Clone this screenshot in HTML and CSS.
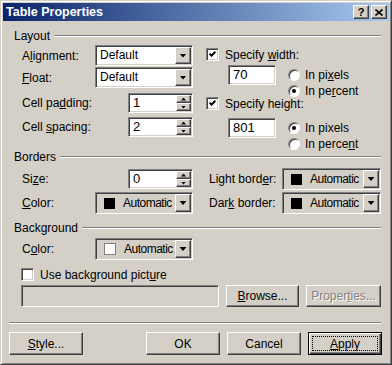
FILE: index.html
```html
<!DOCTYPE html>
<html lang="en">
<head>
  <meta charset="utf-8">
  <title>Table Properties</title>
  <link rel="stylesheet" href="styles.css">
</head>
<body>

<div class="dialog">

  <div class="titlebar">
    <span class="title">Table Properties</span>
    <div class="tbtns">
      <span class="tbtn">?</span>
      <span class="tbtn">
        <svg width="8" height="7" viewBox="0 0 8 7"><path d="M0.5 0.5l7 6M7.5 0.5l-7 6" stroke="#000" stroke-width="1.6"/></svg>
      </span>
    </div>
  </div>

  <div class="content">

    <!-- Layout -->
    <div class="group-head"><span>Layout</span><i class="rule"></i></div>
    <div class="layout">
      <div class="lcol">
        <div class="frow">
          <span>A<u>l</u>ignment:</span>
          <div class="select"><span class="val">Default</span><span class="drop"></span></div>
        </div>
        <div class="frow gap1">
          <span><u>F</u>loat:</span>
          <div class="select"><span class="val">Default</span><span class="drop"></span></div>
        </div>
        <div class="frow spinrow">
          <span>Cell pa<u>d</u>ding:</span>
          <div class="spinner"><span class="val">1</span><span class="spin"><i class="up"></i><i class="down"></i></span></div>
        </div>
        <div class="frow spinrow">
          <span>Cell <u>s</u>pacing:</span>
          <div class="spinner"><span class="val">2</span><span class="spin"><i class="up"></i><i class="down"></i></span></div>
        </div>
      </div>

      <div class="rcol">
        <div class="chkrow">
          <span class="check on"><svg width="7" height="7" viewBox="0 0 7 7"><path d="M0.6 2.6l2 2 3.8-3.8" stroke="#000" stroke-width="2" fill="none"/></svg></span>
          <span>Specify <u>w</u>idth:</span>
        </div>
        <div class="sub">
          <div class="tin">70</div>
          <div class="radios">
            <div class="radio"><i class="dot"></i><span>In pi<u>x</u>els</span></div>
            <div class="radio"><i class="dot on"></i><span>In pe<u>r</u>cent</span></div>
          </div>
        </div>
        <div class="chkrow chk2">
          <span class="check on"><svg width="7" height="7" viewBox="0 0 7 7"><path d="M0.6 2.6l2 2 3.8-3.8" stroke="#000" stroke-width="2" fill="none"/></svg></span>
          <span>Specify height:</span>
        </div>
        <div class="sub sub2">
          <div class="tin">801</div>
          <div class="radios">
            <div class="radio"><i class="dot on"></i><span>In pixels</span></div>
            <div class="radio"><i class="dot"></i><span>In perce<u>n</u>t</span></div>
          </div>
        </div>
      </div>
    </div>

    <!-- Borders -->
    <div class="group-head"><span>Borders</span><i class="rule"></i></div>
    <div class="borders">
      <div class="frow">
        <span>Si<u>z</u>e:</span>
        <div class="spinner"><span class="val">0</span><span class="spin"><i class="up"></i><i class="down"></i></span></div>
      </div>
      <div class="frow">
        <span>Light bord<u>e</u>r:</span>
        <div class="colorsel"><span class="swatch"></span><span class="cval">Automatic</span><span class="drop"></span></div>
      </div>
      <div class="frow">
        <span><u>C</u>olor:</span>
        <div class="colorsel"><span class="swatch"></span><span class="cval">Automatic</span><span class="drop"></span></div>
      </div>
      <div class="frow">
        <span>Dar<u>k</u> border:</span>
        <div class="colorsel"><span class="swatch"></span><span class="cval">Automatic</span><span class="drop"></span></div>
      </div>
    </div>

    <!-- Background -->
    <div class="group-head bg-head"><span>Background</span><i class="rule"></i></div>
    <div class="bgrow">
      <div class="frow">
        <span>C<u>o</u>lor:</span>
        <div class="colorsel"><span class="swatch white"></span><span class="cval">Automatic</span><span class="drop"></span></div>
      </div>
    </div>
    <div class="chkrow picrow">
      <span class="check"></span>
      <span>Use background pict<u>u</u>re</span>
    </div>
    <div class="pathrow">
      <div class="field off"></div>
      <div class="btn browse"><u>B</u>rowse...</div>
      <div class="btn props disabled">Proper<u>t</u>ies...</div>
    </div>

    <div class="sep"></div>

    <div class="actions">
      <div class="btn"><u>S</u>tyle...</div>
      <div class="btn ok">OK</div>
      <div class="btn">Cancel</div>
      <div class="btn def"><u>A</u>pply</div>
    </div>

  </div>
</div>

</body>
</html>
```

FILE: styles.css
```css
body{
  margin:0;
  font-family:"Liberation Sans", Arial, sans-serif;
  font-size:12px;
  color:#000;
  background:#d4d0c8;
}

u{
  text-decoration-thickness:1px;
  text-underline-offset:1px;
}

.dialog{
  width:392px;
  height:365px;
  box-sizing:border-box;
  background:#d4d0c8;
  border:1px solid;
  border-color:#d4d0c8 #404040 #404040 #d4d0c8;
  box-shadow:inset 1px 1px #fff, inset -1px -1px #808080;
  padding:2px;
}

/* title bar */

.titlebar{
  height:18px;
  display:flex;
  align-items:center;
  padding-left:3px;
  background:linear-gradient(to right, #0a246a, #a6caf0);
  color:#fff;
  font-weight:bold;
  font-size:12.5px;
}

.tbtns{
  margin-left:auto;
  display:flex;
  gap:2px;
  padding-right:2px;
}

.tbtn{
  width:16px;
  height:14px;
  box-sizing:border-box;
  display:flex;
  align-items:center;
  justify-content:center;
  background:#d4d0c8;
  color:#000;
  font-size:11px;
  font-weight:bold;
  border:1px solid;
  border-color:#fff #404040 #404040 #fff;
  box-shadow:inset -1px -1px #808080;
}

/* body */

.content{
  padding:8px 8px 0 6px;
}

.group-head{
  display:flex;
  align-items:center;
  gap:4px;
  height:14px;
  padding-left:5px;
}

.rule{
  flex:1;
  height:0;
  border-top:1px solid #808080;
  border-bottom:1px solid #fff;
}

.frow{
  display:flex;
  align-items:center;
  height:21px;
}

.frow > :last-child{
  margin-left:auto;
}

/* sunken and raised edges */

.select,.spinner,.tin,.check,.field,.colorsel{
  box-sizing:border-box;
  border:1px solid;
  border-color:#808080 #fff #fff #808080;
  box-shadow:inset 1px 1px #404040, inset -1px -1px #d4d0c8;
}

.drop,.spin i,.btn{
  box-sizing:border-box;
  background:#d4d0c8;
  border:1px solid;
  border-color:#fff #404040 #404040 #fff;
  box-shadow:inset -1px -1px #808080;
}

.select{
  width:98px;
  height:21px;
  padding:1px;
  display:flex;
  background:#fff;
}

.val{
  flex:1;
  padding-left:3px;
  line-height:17px;
}

.drop{
  width:16px;
  height:17px;
  display:flex;
  align-items:center;
  justify-content:center;
}

.drop::after{
  content:"";
  width:7px;
  height:4px;
  background:#000;
  clip-path:polygon(0 0, 100% 0, 50% 100%);
}

.spinner{
  width:65px;
  height:20px;
  padding:1px;
  display:flex;
  background:#fff;
}

.spinner .val{
  line-height:16px;
  font-size:13px;
}

.spin{
  width:15px;
  display:flex;
  flex-direction:column;
}

.spin i{
  height:8px;
  display:flex;
  align-items:center;
  justify-content:center;
}

.spin i::after{
  content:"";
  width:5px;
  height:3px;
  background:#000;
}

.spin .up::after{
  clip-path:polygon(50% 0, 100% 100%, 0 100%);
}

.spin .down::after{
  clip-path:polygon(0 0, 100% 0, 50% 100%);
}

/* layout group */

.layout{
  display:flex;
  height:105px;
  margin-top:2px;
  padding-left:13px;
}

.lcol{
  width:171px;
}

.gap1{
  margin-top:1px;
}

.spinrow{
  height:20px;
  margin-top:4px;
}

.frow.gap1 + .spinrow{
  margin-top:5px;
}

.rcol{
  flex:1;
  margin-left:13px;
  padding-top:3px;
}

.chkrow{
  display:flex;
  align-items:center;
  gap:6px;
  height:13px;
}

.check{
  width:13px;
  height:13px;
  background:#fff;
  display:flex;
  align-items:center;
  justify-content:center;
}

.chk2{
  margin-top:-1px;
}

.sub{
  display:flex;
  margin-top:4px;
}

.sub2{
  margin-top:8px;
}

.tin{
  width:48px;
  height:20px;
  margin-left:22px;
  padding-left:4px;
  background:#fff;
  line-height:18px;
  font-size:13px;
}

.radios{
  margin-left:12px;
  padding-top:3px;
  display:flex;
  flex-direction:column;
  gap:2px;
}

.radio{
  display:flex;
  align-items:center;
  gap:5px;
  height:14px;
}

.dot{
  width:12px;
  height:12px;
  box-sizing:border-box;
  border-radius:50%;
  border:1px solid;
  border-color:#808080 #fff #fff #808080;
  box-shadow:inset 1px 1px #404040;
  background:#fff;
  display:flex;
  align-items:center;
  justify-content:center;
}

.dot.on::after{
  content:"";
  width:4px;
  height:4px;
  border-radius:50%;
  background:#000;
}

/* borders group */

.borders{
  display:grid;
  grid-template-columns:171px 172px;
  column-gap:16px;
  row-gap:2px;
  margin-top:4px;
  padding-left:13px;
}

.borders .frow,.bgrow .frow{
  height:22px;
}

.colorsel{
  width:98px;
  height:22px;
  padding:1px;
  display:flex;
  align-items:center;
  background:#d4d0c8;
}

.borders .frow:nth-child(2n) .colorsel{
  width:99px;
}

.colorsel .drop{
  height:18px;
}

.swatch{
  width:11px;
  height:11px;
  margin-left:7px;
  background:#000;
}

.swatch.white{
  box-sizing:border-box;
  width:12px;
  height:12px;
  background:#fff;
  border:1px solid #808080;
}

.cval{
  flex:1;
  padding-left:8px;
  letter-spacing:-0.5px;
}

/* background group */

.bg-head{
  margin-top:7px;
}

.bgrow{
  width:171px;
  margin-top:3px;
  padding-left:13px;
}

.picrow{
  margin-top:8px;
  padding-left:12px;
}

.pathrow{
  display:flex;
  gap:7px;
  margin-top:4px;
  padding-left:12px;
}

.field{
  width:198px;
  height:22px;
  background:#d4d0c8;
}

.btn{
  width:74px;
  height:23px;
  display:flex;
  align-items:center;
  justify-content:center;
  position:relative;
}

.pathrow .btn{
  height:22px;
}

.browse{
  width:73px;
}

.props{
  width:75px;
}

.disabled{
  color:#808080;
  text-shadow:1px 1px #fff;
}

.sep{
  margin-top:15px;
  border-top:1px solid #808080;
  border-bottom:1px solid #fff;
}

.actions{
  display:flex;
  gap:7px;
  margin-top:8px;
  margin-right:-1px;
}

.ok{
  margin-left:auto;
}

.btn.def{
  border:1px solid #000;
  box-shadow:inset 1px 1px #fff, inset -1px -1px #404040, inset -2px -2px #808080;
}

.btn.def::after{
  content:"";
  position:absolute;
  inset:3px;
  border:1px dotted #000;
}
```
